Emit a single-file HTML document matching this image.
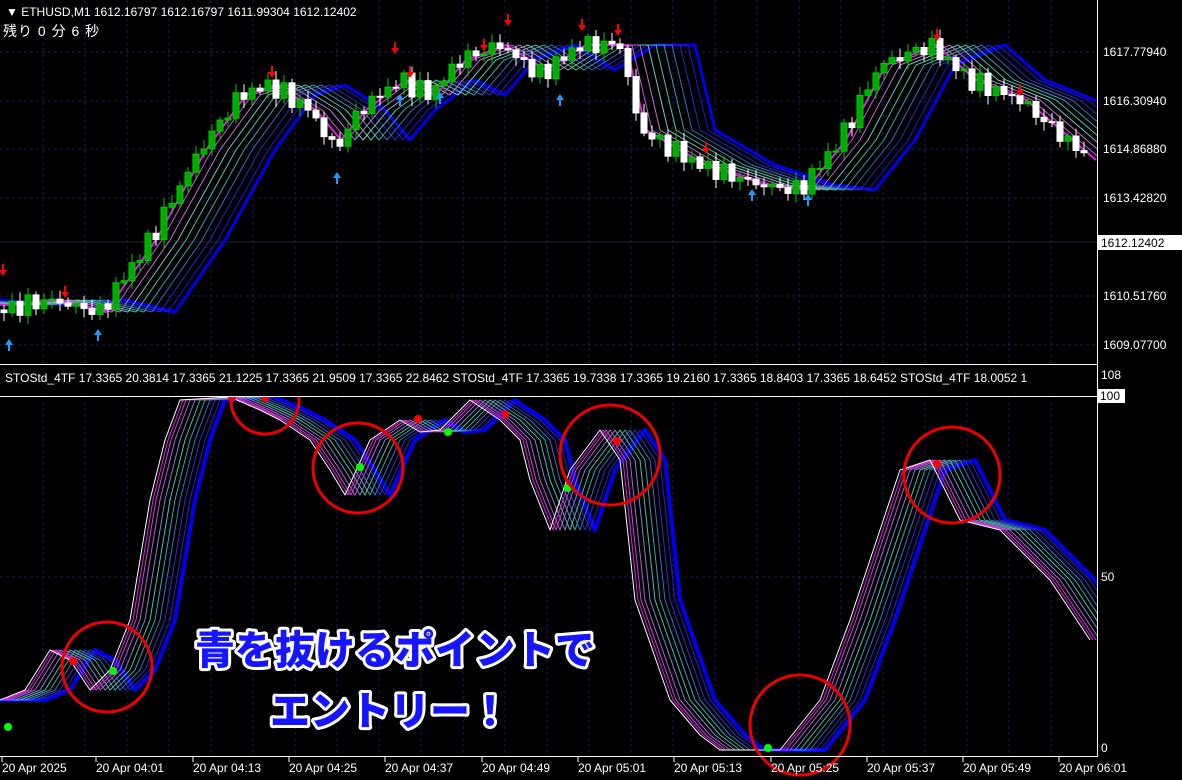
<!DOCTYPE html><html><head><meta charset="utf-8"><style>
body{margin:0;background:#000;width:1182px;height:780px;overflow:hidden;font-family:"Liberation Sans","Noto Sans CJK JP",sans-serif}
svg{position:absolute;left:0;top:0}
.t{fill:#fff;font-size:12px;font-family:"Liberation Sans","Noto Sans CJK JP",sans-serif}
.big{font-family:"Noto Sans CJK JP","WenQuanYi Zen Hei",sans-serif;font-weight:900;font-size:40px;fill:#1515ff;stroke:#fff;stroke-width:6px;paint-order:stroke;stroke-linejoin:round}
use{stroke-linejoin:round}
</style></head><body>
<svg width="1182" height="780" viewBox="0 0 1182 780">
<defs>
<path id="pw" d="M-80,300 L0,305 50,300 100,312 150,240 200,150 240,95 270,85 310,110 335,140 360,110 400,80 430,95 460,60 500,45 540,70 580,45 620,45 640,130 700,165 760,185 800,190 840,140 880,65 930,45 970,80 1020,100 1090,160" fill="none"/>
<path id="sw" d="M-60,700 L0,700 25,690 50,650 70,660 90,690 110,670 130,620 150,500 165,440 180,400 230,397 260,410 280,420 310,440 330,470 345,495 370,440 400,420 420,432 440,430 470,400 500,420 520,440 530,480 550,530 570,470 600,430 620,460 635,600 670,700 700,735 720,750 780,750 820,700 850,620 880,530 900,470 930,460 960,520 1000,530 1050,580 1090,640" fill="none"/>
</defs>
<g stroke="#1a1a5a" stroke-dasharray="3,3" stroke-width="1">
<path d="M43,0V756M85,0V756M127,0V756M169,0V756M211,0V756M253,0V756M295,0V756M337,0V756M379,0V756M421,0V756M463,0V756M505,0V756M547,0V756M589,0V756M631,0V756M673,0V756M715,0V756M757,0V756M799,0V756M841,0V756M883,0V756M925,0V756M967,0V756M1009,0V756M1051,0V756"/>
<path d="M0,52H1097M0,101H1097M0,149H1097M0,198H1097M0,296H1097M0,345H1097M0,577H1097"/>
</g>
<path d="M0,242H1097" stroke="#223" stroke-width="1"/>
<g stroke-width="1">
<use href="#pw" transform="translate(75,0)" stroke="#0000ee" stroke-width="3"/>
<use href="#pw" transform="translate(68,0)" stroke="#1a1ad0"/>
<use href="#pw" transform="translate(60,0)" stroke="#2828c0"/>
<use href="#pw" transform="translate(52,0)" stroke="#3a6ac0"/>
<use href="#pw" transform="translate(44,0)" stroke="#40a0b0"/>
<use href="#pw" transform="translate(36,0)" stroke="#50c0a0"/>
<use href="#pw" transform="translate(28,0)" stroke="#80c0c0"/>
<use href="#pw" transform="translate(20,0)" stroke="#c070d0"/>
<use href="#pw" transform="translate(12,0)" stroke="#d050e0"/>
<use href="#pw" transform="translate(6,0)" stroke="#e020e0" stroke-width="2"/>
</g>
<g id="candles"></g>
<g stroke-width="1">
<use href="#sw" transform="translate(45,0)" stroke="#0000ee" stroke-width="4"/>
<use href="#sw" transform="translate(40,0)" stroke="#2020d0"/>
<use href="#sw" transform="translate(35,0)" stroke="#3030c0"/>
<use href="#sw" transform="translate(30,0)" stroke="#3a70c0"/>
<use href="#sw" transform="translate(25,0)" stroke="#40a0b0"/>
<use href="#sw" transform="translate(20,0)" stroke="#50c0a0"/>
<use href="#sw" transform="translate(15,0)" stroke="#8080d0"/>
<use href="#sw" transform="translate(10,0)" stroke="#b060d0"/>
<use href="#sw" transform="translate(6,0)" stroke="#d040e0"/>
<use href="#sw" transform="translate(3,0)" stroke="#e020e0"/>
<use href="#sw" stroke="#fff"/>
</g>
<rect x="0" y="757" width="1182" height="23" fill="#000"/>
<rect x="1097" y="0" width="85" height="757" fill="#000"/>
<g fill="#f00"><circle cx="73" cy="661" r="4"/><circle cx="232" cy="398" r="4"/><circle cx="265" cy="398" r="4"/><circle cx="418" cy="419" r="4"/><circle cx="505" cy="414" r="4"/><circle cx="617" cy="441" r="4"/><circle cx="937" cy="464" r="4"/></g>
<g fill="#0f0"><circle cx="8" cy="727" r="4"/><circle cx="113" cy="671" r="4"/><circle cx="360" cy="467" r="4"/><circle cx="448" cy="432" r="4"/><circle cx="568" cy="488" r="4"/><circle cx="768" cy="748" r="4"/></g>
<g fill="none" stroke="#e00" stroke-width="3">
<circle cx="107" cy="667" r="45"/><circle cx="265" cy="400" r="34"/><circle cx="358" cy="468" r="45"/><circle cx="610" cy="455" r="50"/><circle cx="952" cy="475" r="48"/><circle cx="800" cy="725" r="50"/>
</g>
<rect x="0" y="365" width="1097" height="31" fill="#000"/>
<path d="M0,364.5H1097M0,396.5H1097M1097.5,0V757M0,756.5H1097" stroke="#fff" stroke-width="1"/>
<path d="M2,757v5M96,757v5M193,757v5M289,757v5M385,757v5M482,757v5M578,757v5M674,757v5M771,757v5M867,757v5M963,757v5M1059,757v5" stroke="#fff"/>
<g class="t">
<text x="6" y="16">▼ ETHUSD,M1  1612.16797 1612.16797 1611.99304 1612.12402</text>
<text x="3" y="36" style="font-size:14px;letter-spacing:1px">残り 0 分 6 秒</text>
<text x="5" y="382">STOStd_4TF 17.3365 20.3814 17.3365 21.1225 17.3365 21.9509 17.3365 22.8462  STOStd_4TF 17.3365 19.7338 17.3365 19.2160 17.3365 18.8403 17.3365 18.6452  STOStd_4TF 18.0052 1</text>
<text x="1103" y="56">1617.77940</text><text x="1103" y="105">1616.30940</text><text x="1103" y="153">1614.86880</text><text x="1103" y="202">1613.42820</text>
<text x="1103" y="300">1610.51760</text><text x="1103" y="349">1609.07700</text>
<text x="1101" y="379">108</text><text x="1101" y="581">50</text><text x="1101" y="752">0</text>
<text x="2" y="772">20 Apr 2025</text><text x="96" y="772">20 Apr 04:01</text><text x="193" y="772">20 Apr 04:13</text><text x="289" y="772">20 Apr 04:25</text><text x="385" y="772">20 Apr 04:37</text><text x="482" y="772">20 Apr 04:49</text><text x="578" y="772">20 Apr 05:01</text><text x="674" y="772">20 Apr 05:13</text><text x="771" y="772">20 Apr 05:25</text><text x="867" y="772">20 Apr 05:37</text><text x="963" y="772">20 Apr 05:49</text><text x="1059" y="772">20 Apr 06:01</text>
</g>
<rect x="1098" y="235" width="84" height="15" fill="#fff"/><text x="1101" y="247" style="font-size:12px;fill:#000">1612.12402</text>
<rect x="1098" y="389" width="27" height="14" fill="#fff"/><text x="1100" y="400" style="font-size:12px;fill:#000">100</text>
<text class="big" x="395" y="664" text-anchor="middle">青を抜けるポイントで</text>
<text class="big" x="390" y="725" text-anchor="middle">エントリー！</text>
</svg>
<script>
(function(){
var P=[[0,310],[50,300],[100,312],[150,240],[200,150],[240,95],[270,85],[310,110],[335,150],[360,110],[400,80],[430,95],[460,60],[500,45],[540,75],[580,45],[620,45],[640,130],[700,165],[760,185],[800,190],[840,140],[880,65],[930,45],[970,80],[1020,100],[1090,160]];
function f(x){for(var i=1;i<P.length;i++){if(x<=P[i][0]){var a=P[i-1],b=P[i];return a[1]+(b[1]-a[1])*(x-a[0])/(b[0]-a[0]);}}return 160;}
var g=document.getElementById('candles'),s='',prev=f(0);
for(var x=4;x<1092;x+=8){var c=f(x)+Math.sin(x*0.37)*7+Math.sin(x*1.3)*4;var o=prev;var hi=Math.min(o,c)-3-Math.abs(Math.sin(x*.7))*6,lo=Math.max(o,c)+3+Math.abs(Math.cos(x*.9))*6;
var up=c<o;var col=up?'#0c0':'#fff';
s+='<line x1="'+x+'" x2="'+x+'" y1="'+hi+'" y2="'+lo+'" stroke="'+col+'"/>';
s+='<rect x="'+(x-3)+'" y="'+Math.min(o,c)+'" width="6" height="'+Math.max(1,Math.abs(c-o))+'" fill="'+(up?'#0a0':'#fff')+'" stroke="'+col+'"/>';
prev=c;}
var ar=[[3,270,1],[65,292,1],[272,72,1],[395,48,1],[410,72,1],[484,45,1],[508,20,1],[582,25,1],[618,30,1],[706,148,1],[937,35,1],[1020,90,1],[98,335,0],[337,178,0],[400,100,0],[440,98,0],[560,100,0],[752,195,0],[808,200,0],[9,345,0]];
ar.forEach(function(a){if(a[2])s+='<path d="M'+(a[0]-4)+','+a[1]+'h8l-4,6z M'+(a[0]-1)+','+(a[1]-6)+'h2v6h-2z" fill="#f00"/>';else s+='<path d="M'+(a[0]-4)+','+a[1]+'h8l-4,-6z M'+(a[0]-1)+','+a[1]+'h2v6h-2z" fill="#29f"/>';});
g.innerHTML=s;})();
</script>
</body></html>
